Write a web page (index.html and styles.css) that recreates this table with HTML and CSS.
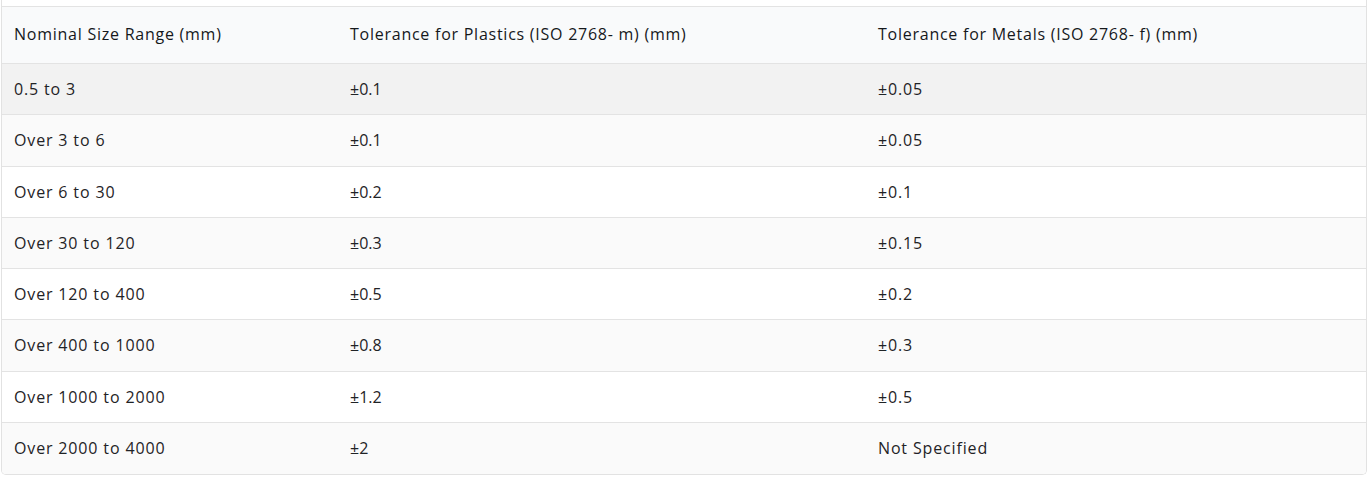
FILE: index.html
```html
<!DOCTYPE html>
<html>
<head>
<meta charset="utf-8">
<link rel="stylesheet" href="styles.css">
</head>
<body>
<div class="wrap">
  <table class="tol">
    <thead>
      <tr><th>Nominal Size Range (mm)</th><th>Tolerance for Plastics (ISO 2768- m) (mm)</th><th>Tolerance for Metals (ISO 2768- f) (mm)</th></tr>
    </thead>
    <tbody>
      <tr class="hover"><td>0.5 to 3</td><td>±0.1</td><td>±0.05</td></tr>
      <tr><td>Over 3 to 6</td><td>±0.1</td><td>±0.05</td></tr>
      <tr><td>Over 6 to 30</td><td>±0.2</td><td>±0.1</td></tr>
      <tr><td>Over 30 to 120</td><td>±0.3</td><td>±0.15</td></tr>
      <tr><td>Over 120 to 400</td><td>±0.5</td><td>±0.2</td></tr>
      <tr><td>Over 400 to 1000</td><td>±0.8</td><td>±0.3</td></tr>
      <tr><td>Over 1000 to 2000</td><td>±1.2</td><td>±0.5</td></tr>
      <tr><td>Over 2000 to 4000</td><td>±2</td><td>Not Specified</td></tr>
    </tbody>
  </table>
</div>
</body>
</html>
```
FILE: styles.css
```css
html, body { margin: 0; padding: 0; background: #fff; }
body { font-family: "Open Sans", "Liberation Sans", sans-serif; color: #1f2326; }
.wrap {
  margin: 0 2px 0 1px;
  padding-top: 6px;
  border: 1px solid #e2e2e2;
  border-top: none;
  border-radius: 0 0 5px 5px;
  overflow: hidden;
}
.tol { width: 100%; border-collapse: collapse; font-size: 16px; line-height: 20px; }
.tol th, .tol td { text-align: left; padding: 0 13px; border-top: 1px solid #e3e3e3; vertical-align: middle; }
.tol th:first-child, .tol td:first-child { padding-left: 12px; }
.tol thead tr { height: 57px; }
.tol tbody tr { height: 51.25px; }
.tol th { font-weight: 500; letter-spacing: 0.75px; color: #15181b; background: #f9fafb; padding-bottom: 2px; }
.tol td:first-child, .tol td:last-child { letter-spacing: 0.85px; }
.tol th:nth-child(1) { width: 310px; }
.tol th:nth-child(2) { width: 502px; }
.tol tbody tr:nth-child(even) td { background: #fafafa; }
.tol tbody tr.hover td { background: #f2f2f2; }
```
